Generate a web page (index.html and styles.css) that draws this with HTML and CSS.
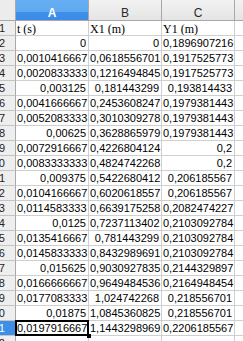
FILE: index.html
```html
<!DOCTYPE html>
<html>
<head>
<meta charset="utf-8">
<link rel="stylesheet" href="styles.css">
</head>
<body>
<div class="sheet">
  <div class="corner"></div>
  <div class="colhead sel">A</div>
  <div class="colhead">B</div>
  <div class="colhead">C</div>
  <div class="colhead last"></div>

  <div class="rowhead"><span>1</span></div>
  <div class="cell txt">t (s)</div><div class="cell txt">X1 (m)</div><div class="cell txt">Y1 (m)</div><div class="cell last"></div>

  <div class="rowhead"><span>2</span></div>
  <div class="cell">0</div><div class="cell">0</div><div class="cell">0,1896907216</div><div class="cell last"></div>

  <div class="rowhead"><span>3</span></div>
  <div class="cell">0,0010416667</div><div class="cell">0,0618556701</div><div class="cell">0,1917525773</div><div class="cell last"></div>

  <div class="rowhead"><span>4</span></div>
  <div class="cell">0,0020833333</div><div class="cell">0,1216494845</div><div class="cell">0,1917525773</div><div class="cell last"></div>

  <div class="rowhead"><span>5</span></div>
  <div class="cell">0,003125</div><div class="cell">0,181443299</div><div class="cell">0,193814433</div><div class="cell last"></div>

  <div class="rowhead"><span>6</span></div>
  <div class="cell">0,0041666667</div><div class="cell">0,2453608247</div><div class="cell">0,1979381443</div><div class="cell last"></div>

  <div class="rowhead"><span>7</span></div>
  <div class="cell">0,0052083333</div><div class="cell">0,3010309278</div><div class="cell">0,1979381443</div><div class="cell last"></div>

  <div class="rowhead"><span>8</span></div>
  <div class="cell">0,00625</div><div class="cell">0,3628865979</div><div class="cell">0,1979381443</div><div class="cell last"></div>

  <div class="rowhead"><span>9</span></div>
  <div class="cell">0,0072916667</div><div class="cell">0,4226804124</div><div class="cell">0,2</div><div class="cell last"></div>

  <div class="rowhead"><span>10</span></div>
  <div class="cell">0,0083333333</div><div class="cell">0,4824742268</div><div class="cell">0,2</div><div class="cell last"></div>

  <div class="rowhead"><span>11</span></div>
  <div class="cell">0,009375</div><div class="cell">0,5422680412</div><div class="cell">0,206185567</div><div class="cell last"></div>

  <div class="rowhead"><span>12</span></div>
  <div class="cell">0,0104166667</div><div class="cell">0,6020618557</div><div class="cell">0,206185567</div><div class="cell last"></div>

  <div class="rowhead"><span>13</span></div>
  <div class="cell">0,0114583333</div><div class="cell">0,6639175258</div><div class="cell">0,2082474227</div><div class="cell last"></div>

  <div class="rowhead"><span>14</span></div>
  <div class="cell">0,0125</div><div class="cell">0,7237113402</div><div class="cell">0,2103092784</div><div class="cell last"></div>

  <div class="rowhead"><span>15</span></div>
  <div class="cell">0,0135416667</div><div class="cell">0,781443299</div><div class="cell">0,2103092784</div><div class="cell last"></div>

  <div class="rowhead"><span>16</span></div>
  <div class="cell">0,0145833333</div><div class="cell">0,8432989691</div><div class="cell">0,2103092784</div><div class="cell last"></div>

  <div class="rowhead"><span>17</span></div>
  <div class="cell">0,015625</div><div class="cell">0,9030927835</div><div class="cell">0,2144329897</div><div class="cell last"></div>

  <div class="rowhead"><span>18</span></div>
  <div class="cell">0,0166666667</div><div class="cell">0,9649484536</div><div class="cell">0,2164948454</div><div class="cell last"></div>

  <div class="rowhead"><span>19</span></div>
  <div class="cell">0,0177083333</div><div class="cell">1,024742268</div><div class="cell">0,218556701</div><div class="cell last"></div>

  <div class="rowhead"><span>20</span></div>
  <div class="cell">0,01875</div><div class="cell">1,0845360825</div><div class="cell">0,218556701</div><div class="cell last"></div>

  <div class="rowhead sel"><span>21</span></div>
  <div class="cell active">0,0197916667</div><div class="cell">1,1443298969</div><div class="cell">0,2206185567</div><div class="cell last"></div>

  <div class="rowhead"><span>22</span></div>
  <div class="cell"></div><div class="cell"></div><div class="cell"></div><div class="cell last"></div>
</div>
</body>
</html>
```

FILE: styles.css
```css
html, body {
  margin: 0;
  padding: 0;
  background: #ffffff;
  overflow: hidden;
}

.sheet {
  display: grid;
  grid-template-columns: 16px 73px 73px 73px 20px;
  grid-template-rows: 21px repeat(22, 15px);
  width: 243px;
  height: 341px;
  overflow: hidden;
  font-family: "Liberation Sans", Arial, sans-serif;
  font-size: 11px;
  color: #000;
}

.corner {
  background: #ececec;
  border-right: 1px solid #a8a8a8;
  border-bottom: 1px solid #a8a8a8;
  box-sizing: border-box;
}

.colhead {
  box-sizing: border-box;
  background: linear-gradient(#f2f2f2 0, #ebebeb 55%, #e4e4e4 100%);
  border-right: 1px solid #a8a8a8;
  border-bottom: 1px solid #a8a8a8;
  display: flex;
  align-items: flex-end;
  justify-content: center;
  font-size: 12px;
  line-height: 14px;
  color: #2a2a2a;
}

.colhead.sel {
  background: linear-gradient(#66aef2 0, #5ea9f0 60%, #3f8fe9 60%, #3b8ce8 100%);
  color: #ffffff;
  font-weight: bold;
}

.colhead.last {
  border-right: none;
}

.rowhead {
  box-sizing: border-box;
  background: #eeeeee;
  border-right: 1px solid #a8a8a8;
  border-bottom: 1px solid #c4c4c4;
  display: flex;
  justify-content: flex-end;
  align-items: center;
  padding-right: 10px;
  overflow: hidden;
  line-height: 14px;
  color: #222;
}

.rowhead span {
  white-space: nowrap;
  flex: none;
}

.rowhead.sel {
  background: #3f8fe9;
  color: #ffffff;
}

.cell {
  box-sizing: border-box;
  border-right: 1px solid #cfcfcf;
  border-bottom: 1px solid #cfcfcf;
  line-height: 14px;
  text-align: right;
  padding: 0 2px 0 1px;
  white-space: nowrap;
  overflow: hidden;
}

.cell.txt {
  text-align: left;
  font-family: "Liberation Serif", "Times New Roman", serif;
  font-size: 12px;
  padding-top: 1px;
  color: #000;
}

.cell.last {
  border-right: none;
}

.cell.active {
  position: relative;
  overflow: visible;
}

.cell.active::after {
  content: "";
  position: absolute;
  left: -1px;
  top: -1px;
  right: -1px;
  bottom: -1px;
  border: 2px solid #000;
}

.cell.active::before {
  content: "";
  position: absolute;
  right: -3px;
  bottom: -3px;
  width: 4px;
  height: 4px;
  background: #000;
  z-index: 2;
}
```
